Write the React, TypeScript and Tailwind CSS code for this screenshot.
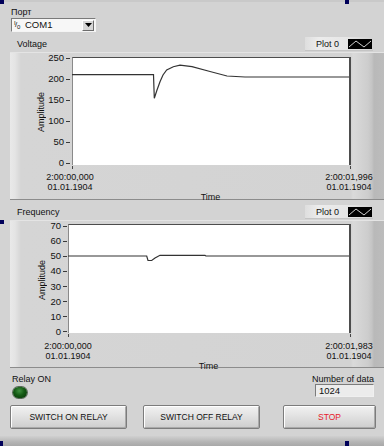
import React from "react";

type Pt = [number, number];

type ChartProps = {
  yLabels: string[];
  padCls: string;
  axisCls: string;
  labelsCls: string;
  tickCls: string;
  plotCls: string;
  xLeftCls: string;
  xRowCls: string;
  timeCls: string;
  origin: Pt;
  size: Pt;
  points: Pt[];
  rightLabel: string;
};

function Chart(p: ChartProps) {
  const line = p.points.map(([x, y]) => `${x - p.origin[0]},${y - p.origin[1]}`).join(" ");
  return (
    <div
      className={`h-[148px] w-[374px] shrink-0 border-t border-b border-t-[#e4e4e4] border-b-[#8c8c8c] bg-[linear-gradient(90deg,#e9e9e9_0px,#e4e4e4_5px,#d5d5d5_11px,#d3d3d3_341px,#dadada_343px,#cdcdcd_358px,#c4c4c4_362px,#b9b9b9_364px,#bcbcbc_374px)] ${p.padCls}`}
    >
      <div className="flex items-start">
        <div className={`flex shrink-0 self-stretch ${p.axisCls}`}>
          <div className="flex w-[10px] items-center justify-center">
            <span className="rotate-180 text-[9px] leading-[10px] [writing-mode:vertical-rl]">Amplitude</span>
          </div>
          <div className={`flex flex-1 flex-col justify-between ${p.labelsCls}`}>
            {p.yLabels.map((l) => (
              <div key={l} className={`flex h-[10px] items-center justify-end ${p.tickCls}`}>
                <span className="text-[9.5px] leading-[10px]">{l}</span>
                <span className="ml-[2px] h-px w-[4px] bg-[#3a3a3a]" />
              </div>
            ))}
          </div>
        </div>
        <div className={`relative shrink-0 border-t border-l border-r-2 border-[#4d4d4d] border-l-[#8a8a8a] bg-white ${p.plotCls}`}>
          <svg
            className="absolute -top-px -left-px overflow-visible"
            width={p.size[0]}
            height={p.size[1]}
          >
            <polyline points={line} fill="none" stroke="#333" strokeWidth="1.2" />
          </svg>
          <span className="absolute -bottom-[4px] -left-px h-[3px] w-px bg-[#444]" />
          <span className="absolute -right-[2px] -bottom-[4px] h-[3px] w-px bg-[#444]" />
        </div>
      </div>
      <div className={`mt-[4px] flex text-[9px] leading-[10px] ${p.xRowCls}`}>
        <div className={`w-[56px] text-center ${p.xLeftCls}`}>
          <div>2:00:00,000</div>
          <div>01.01.1904</div>
        </div>
        <div className="ml-auto w-[56px] text-center">
          <div>{p.rightLabel}</div>
          <div>01.01.1904</div>
        </div>
      </div>
      <div className={`text-center text-[9px] leading-[10px] ${p.timeCls}`}>Time</div>
    </div>
  );
}

function Legend() {
  return (
    <div className="flex h-[13px] w-[68px] items-center bg-[linear-gradient(90deg,#dedede,#ececec_20%,#e6e6e6_60%,#d2d2d2)] pl-[11px] shadow-[0_1px_0_#c4c4c4]">
      <span className="text-[9px] leading-[10px]">Plot 0</span>
      <div className="mr-px ml-auto h-[10px] w-[24px] bg-black">
        <svg width="24" height="10" viewBox="0 0 24 10">
          <polyline points="1,8 8,2 16,8 23,2" fill="none" stroke="#cfcfcf" strokeWidth="1" />
        </svg>
      </div>
    </div>
  );
}

function Button({ label, cls, textCls }: { label: string; cls: string; textCls: string }) {
  return (
    <div
      className={`flex h-[24px] shrink-0 items-center justify-center rounded-[2px] border border-[#7c7c7c] bg-[linear-gradient(180deg,#f2f2f2,#e2e2e2_45%,#cdcdcd)] shadow-[inset_1px_1px_0_#ffffff,inset_-1px_-1px_0_#a9a9a9] ${cls}`}
    >
      <span className={`text-[8.5px] leading-[10px] ${textCls}`}>{label}</span>
    </div>
  );
}

export default function App() {
  return (
    <div className="relative flex h-[446px] w-[384px] flex-col overflow-hidden bg-[#d3d3d3] text-[#111] [font-family:'Liberation_Sans',Arial,sans-serif]">
      <div className="h-[2px] bg-[#c9c9c9]" />
      <div className="pt-[5px] pl-[11px]">
        <div className="text-[9px] leading-[11px]">Порт</div>
        <div className="flex h-[14px] w-[85px] items-center border border-t-[#7a7a7a] border-l-[#7a7a7a] border-r-[#f4f4f4] border-b-[#f4f4f4] bg-[#f7f7f7]">
          <div className="relative ml-[2px] h-[10px] w-[8px] text-[6px] leading-[6px]">
            <span className="absolute top-0 left-0">I</span>
            <span className="absolute top-[1px] left-[1px] text-[8px] leading-[8px]">/</span>
            <span className="absolute bottom-0 left-[3px]">0</span>
          </div>
          <span className="ml-[3px] text-[9.5px] leading-[10px]">COM1</span>
          <div className="mr-px ml-auto flex h-[11px] w-[12px] items-center justify-center border border-t-[#fff] border-l-[#fff] border-r-[#6c6c6c] border-b-[#6c6c6c] bg-[#d6d6d6]">
            <svg width="7" height="4" viewBox="0 0 7 4">
              <polygon points="0,0 7,0 3.5,4" fill="#000" />
            </svg>
          </div>
        </div>
      </div>

      <div className="mt-[2px] flex h-[18px] items-center pt-px pr-[11px] pl-[17px]">
        <span className="text-[9px] leading-[10px]">Voltage</span>
        <div className="ml-auto">
          <Legend />
        </div>
      </div>

      <div className="pl-[10px]">
        <Chart
          yLabels={["250", "200", "150", "100", "50", "0"]}
          padCls="pt-[4px]"
          axisCls="w-[62px] pl-[26px]"
          labelsCls="-mt-[4px] h-[115px]"
          tickCls="pr-[2px]"
          plotCls="h-[108px] w-[279px]"
          xLeftCls="ml-[32px]"
          xRowCls="w-[367px]"
          timeCls="ml-[62px] w-[277px]"
          origin={[72, 57]}
          size={[279, 108]}
          points={[
            [72, 74.7],
            [153.5, 74.7],
            [154.3, 98.3],
            [157, 90],
            [160, 81.7],
            [163, 75],
            [166.7, 70],
            [173.3, 66.7],
            [180, 65.2],
            [192, 66.7],
            [210, 71.5],
            [227, 76],
            [245, 77],
            [349, 77],
          ]}
          rightLabel="2:00:01,996"
        />
      </div>

      <div className="flex h-[20px] items-center pt-[3px] pr-[11px] pl-[17px]">
        <span className="text-[9px] leading-[10px]">Frequency</span>
        <div className="ml-auto">
          <Legend />
        </div>
      </div>

      <div className="pl-[10px]">
        <Chart
          yLabels={["70", "60", "50", "40", "30", "20", "10", "0"]}
          padCls="pt-[3px]"
          axisCls="w-[58px] pl-[27px]"
          labelsCls="-mt-[3px] h-[116px]"
          tickCls="pr-px"
          plotCls="h-[109px] w-[283px]"
          xLeftCls="ml-[30px]"
          xRowCls="w-[367px]"
          timeCls="ml-[58px] w-[281px]"
          origin={[68, 224]}
          size={[283, 109]}
          points={[
            [68, 256],
            [146.7, 256],
            [148, 260.3],
            [151.7, 260.5],
            [155, 258],
            [160, 255.3],
            [205, 255.4],
            [206, 256],
            [349, 256],
          ]}
          rightLabel="2:00:01,983"
        />
      </div>

      <div className="flex items-start justify-between pt-[5px] pr-[10px] pl-[12px]">
        <div className="flex flex-col">
          <span className="text-[9px] leading-[12px]">Relay ON</span>
          <div className="mt-[2px] ml-px h-[11px] w-[14px] rounded-full bg-[radial-gradient(ellipse_at_45%_35%,#3f8f3f_0%,#145a14_45%,#063006_100%)] shadow-[0_0_0_1px_#5a6a5a]" />
        </div>
        <div className="flex flex-col items-end">
          <span className="text-[9px] leading-[12px]">Number of data</span>
          <div className="-mt-px flex h-[13px] w-[59px] items-center border border-t-[#7c7c7c] border-l-[#7c7c7c] border-r-[#f0f0f0] border-b-[#f0f0f0] bg-[#ececec] pl-[3px]">
            <span className="text-[9.5px] leading-[10px]">1024</span>
          </div>
        </div>
      </div>

      <div className="mt-[7px] flex pl-[10px]">
        <Button label="SWITCH ON RELAY" cls="w-[117px]" textCls="text-[#111]" />
        <Button label="SWITCH OFF RELAY" cls="ml-[16px] w-[117px]" textCls="text-[#111]" />
        <Button label="STOP" cls="ml-[23px] w-[93px]" textCls="text-[#e8202a]" />
      </div>

      <div className="mt-auto h-[10px] bg-[linear-gradient(180deg,#d0d0d0,#b4b4b4_60%,#a8a8a8)]" />

      <span className="absolute top-0 left-0 h-[4px] w-[4px] bg-[#00005a]" />
      <span className="absolute top-0 left-[345px] h-[4px] w-[4px] bg-[#00005a]" />
      <span className="absolute top-[220px] left-0 h-[4px] w-[4px] bg-[#00005a]" />
      <span className="absolute top-[441px] left-0 h-[5px] w-[3px] bg-[#00005a]" />
      <span className="absolute top-[441px] left-[345px] h-[5px] w-[4px] bg-[#00005a]" />
    </div>
  );
}
